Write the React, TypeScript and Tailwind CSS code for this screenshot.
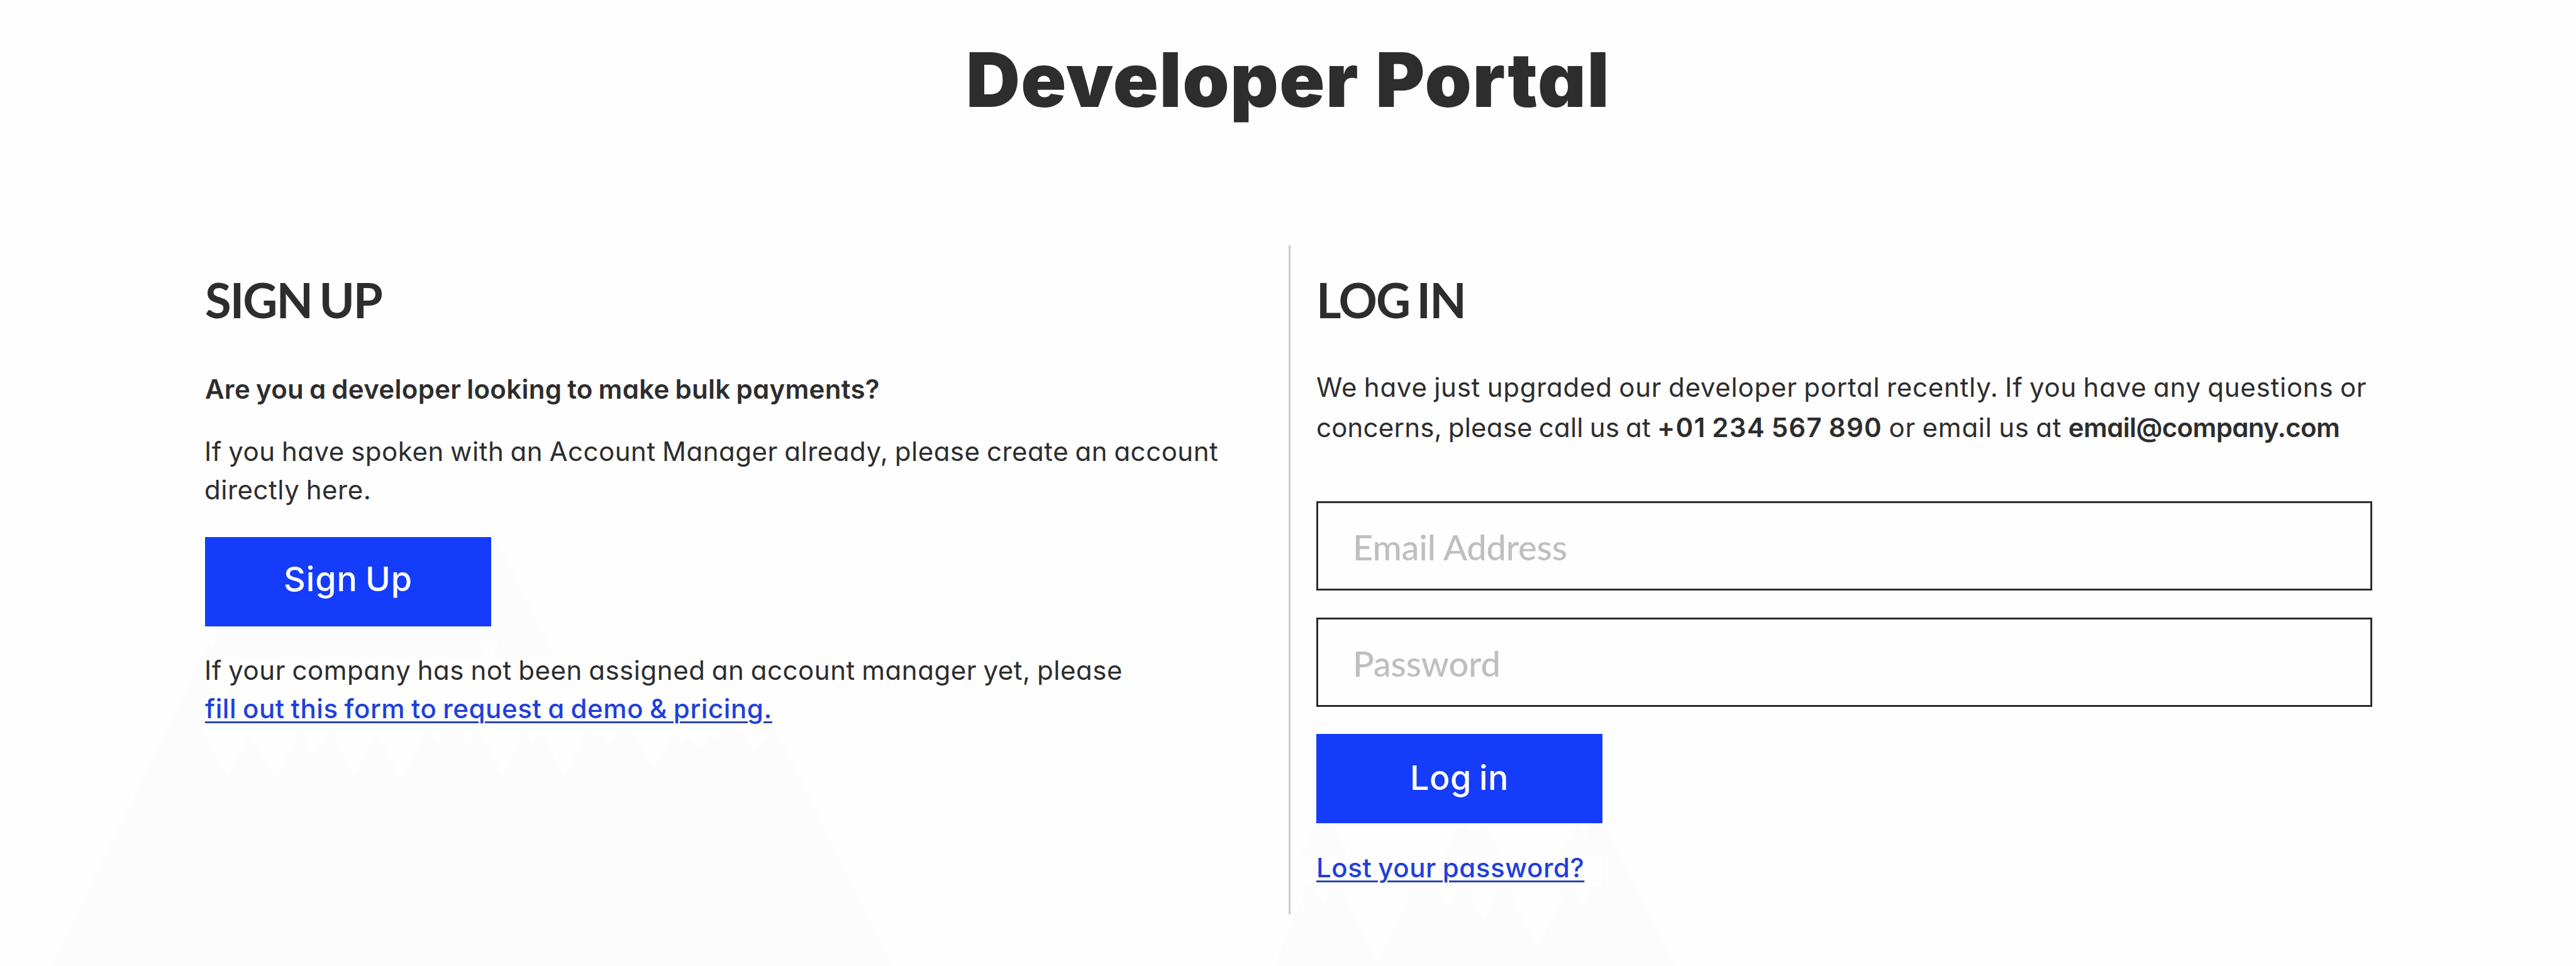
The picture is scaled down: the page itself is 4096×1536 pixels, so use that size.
import type { ReactNode } from 'react';

function Mountains() {
  return (
    <svg className="absolute inset-0 h-full w-full" viewBox="0 0 4800 1800" fill="#fcfcfc" aria-hidden="true">
      <path d="M385 1225 400 1193V1167H850L915 1000H923L1035 1225H917L930 1192H890L908 1225Z" />
      <path d="M96 1800 385 1205H392L380 1367 422 1450 466 1367 513 1450 557 1367H562L585 1408 607 1367H620L660 1443 700 1367H705L747 1453 790 1367H805L815 1385 828 1367H857L870 1392 885 1367H897L937 1443 975 1367H982L993 1388 1008 1367H1013L1051 1446 1093 1367H1105L1112 1377 1124 1367 1135 1390 1150 1367H1183L1218 1433 1253 1367H1262L1269 1383 1285 1367 1303 1394 1321 1367 1332 1380 1340 1367H1388L1405 1404 1428 1367H1450L1516 1500 1664 1800Z" />
      <path d="M2424 1593 2455 1537H2463L2470 1545 2478 1537H2485L2510 1593Z" />
      <path d="M2690 1593 2718 1537H2735L2745 1558 2758 1537H2768L2796 1593Z" />
      <path d="M2375 1800 2428 1670 2435 1651H2447L2466 1685 2483 1651H2497L2567 1793 2636 1651H2642L2652 1665 2662 1651H2680L2701 1690 2720 1651H2732L2763 1716 2795 1651H2807L2866 1765 2922 1651H2928L2948 1687 2968 1651H2985V1593H2911L2937 1537H2943L2953 1560 2965 1535H2990L3123 1800Z" />
    </svg>
  );
}

function Heading({ children }: { children: ReactNode }) {
  return (
    <h2 className="font-[Lato,sans-serif] text-[76px] leading-[90px] font-bold tracking-[-2px] whitespace-nowrap [word-spacing:-5px]">
      {children}
    </h2>
  );
}

function Field({ type, label }: { type: string; label: string }) {
  return (
    <input
      type={type}
      placeholder={label}
      aria-label={label}
      className="block h-[142px] w-full border-[3px] border-[#2d2d2d] bg-[#fefefe] px-[55px] pt-[2px] font-[Lato,sans-serif] text-[56px] font-medium tracking-[-0.2px] placeholder:text-[#bfbfbf] placeholder:opacity-100"
    />
  );
}

export default function App() {
  return (
    <div className="relative h-[1536px] w-[4096px] overflow-hidden bg-[#fefefe] font-[Inter,sans-serif] text-[42px] text-[#2d2d2d] [font-feature-settings:'cv11']">
      <Mountains />
      <div className="relative pt-[62px]">
        <h1 className="text-center text-[119px] leading-[130px] font-black tracking-[1.5px] [word-spacing:1px]">
          Developer Portal
        </h1>

        <main className="mt-[198px] flex h-[1064px]">
          <section className="w-[2049px] pt-[42px] pl-[326px] whitespace-nowrap">
            <Heading>SIGN UP</Heading>
            <p className="mt-[66px] leading-[61px] font-semibold tracking-[0.3px] [word-spacing:-2px]">
              Are you a developer looking to make bulk payments?
            </p>
            <p className="mt-[39px] leading-[60.7px] font-[430] tracking-[0.52px] [word-spacing:-2px] -ml-[1px]">
              If you have spoken with an Account Manager already, please create an account
              <br />
              directly here.
            </p>
            <button className="mt-[45px] block h-[142px] w-[455px] bg-[#143cfa] pb-[9px] text-[54px] font-medium tracking-[0.8px] text-white [word-spacing:-3px]">
              Sign Up
            </button>
            <p className="mt-[40px] -ml-[1px] leading-[60.5px] font-[430] tracking-[0.54px] [word-spacing:-2px]">
              If your company has not been assigned an account manager yet, please
              <br />
              <a
                href="#"
                className="ml-[1px] font-[460] tracking-[0.6px] text-[#1e40dc] underline decoration-[#2c44ac] decoration-[3px] underline-offset-[5px]"
              >
                fill out this form to request a demo &amp; pricing.
              </a>
            </p>
          </section>

          <section className="w-[1726px] border-l-[3px] border-[#cbcbcb] pt-[42px] pl-[41px] whitespace-nowrap">
            <Heading>LOG IN</Heading>
            <p className="mt-[62px] leading-[63.7px] font-[430] tracking-[0.75px] [word-spacing:-2px]">
              We have just upgraded our developer portal recently. If you have any questions or
              <br />
              <span className="tracking-[0.2px]">concerns, please call us at </span>
              <b className="font-semibold tracking-[1.25px]">+01 234 567 890</b>
              <span className="tracking-[0.75px]"> or email us at </span>
              <b className="font-semibold tracking-[-0.65px]">email@company.com</b>
            </p>
            <form className="mt-[86px] flex w-[1679px] flex-col gap-[43px]">
              <Field type="email" label="Email Address" />
              <Field type="password" label="Password" />
              <button
                type="button"
                className="h-[142px] w-[455px] bg-[#143cfa] pb-[4px] text-[54px] font-medium tracking-[0.5px] text-white [word-spacing:-3px]"
              >
                Log in
              </button>
            </form>
            <a
              href="#"
              className="mt-[40px] inline-block leading-[61px] font-[460] tracking-[0.6px] text-[#1e40dc] underline decoration-[#2c44ac] decoration-[3px] underline-offset-[5px] [word-spacing:-2px]"
            >
              Lost your password?
            </a>
          </section>
        </main>
      </div>
    </div>
  );
}
